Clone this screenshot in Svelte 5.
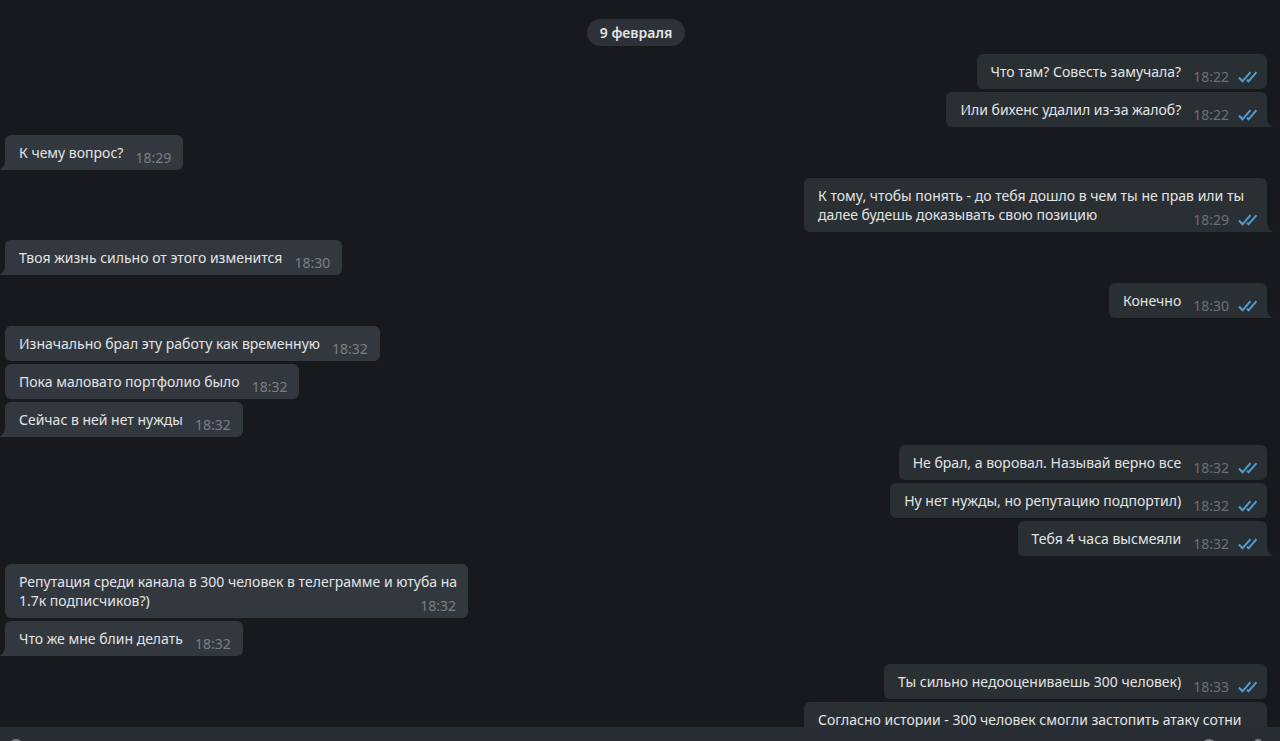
<script lang="ts">
  const groups = [
    {
      out: true,
      messages: [
        { text: 'Что там? Совесть замучала?', time: '18:22' },
        { text: 'Или бихенс удалил из-за жалоб?', time: '18:22' },
      ],
    },
    { out: false, messages: [{ text: 'К чему вопрос?', time: '18:29' }] },
    {
      out: true,
      messages: [
        {
          text: 'К тому, чтобы понять - до тебя дошло в чем ты не прав или ты далее будешь доказывать свою позицию',
          time: '18:29',
        },
      ],
    },
    { out: false, messages: [{ text: 'Твоя жизнь сильно от этого изменится', time: '18:30' }] },
    { out: true, messages: [{ text: 'Конечно', time: '18:30' }] },
    {
      out: false,
      messages: [
        { text: 'Изначально брал эту работу как временную', time: '18:32' },
        { text: 'Пока маловато портфолио было', time: '18:32' },
        { text: 'Сейчас в ней нет нужды', time: '18:32' },
      ],
    },
    {
      out: true,
      messages: [
        { text: 'Не брал, а воровал. Называй верно все', time: '18:32' },
        { text: 'Ну нет нужды, но репутацию подпортил)', time: '18:32' },
        { text: 'Тебя 4 часа высмеяли', time: '18:32' },
      ],
    },
    {
      out: false,
      messages: [
        {
          text: 'Репутация среди канала в 300 человек в телеграмме и ютуба на 1.7к подписчиков?)',
          time: '18:32',
        },
        { text: 'Что же мне блин делать', time: '18:32' },
      ],
    },
    {
      out: true,
      messages: [
        { text: 'Ты сильно недооцениваешь 300 человек)', time: '18:33' },
        { text: 'Согласно истории - 300 человек смогли застопить атаку сотни', time: '18:33' },
      ],
    },
  ]
</script>

<div class="chat">
  <main class="feed">
    <div class="date">9 февраля</div>
    {#each groups as group}
      <section class="group" class:out={group.out}>
        {#each group.messages as message, i}
          <div class="bubble" class:tail={i === group.messages.length - 1}>
            {message.text}
            <span class="meta">
              <time>{message.time}</time>
              {#if group.out}
                <svg width="20" height="12" viewBox="0 0 20 12" aria-hidden="true">
                  <path d="M1 6.5 L4.5 10.3 L12.5 1.2 M9 8.8 L10.5 10.3 L18.5 1.2" />
                </svg>
              {/if}
            </span>
          </div>
        {/each}
      </section>
    {/each}
  </main>

  <footer class="composer">
    <button aria-label="Прикрепить файл">
      <svg width="16" height="16" viewBox="0 0 16 16"><circle cx="8" cy="8" r="7" /></svg>
    </button>
    <span class="space"></span>
    <button aria-label="Эмодзи">
      <svg width="16" height="16" viewBox="0 0 16 16"><circle cx="8" cy="8" r="7" /></svg>
    </button>
    <button class="voice" aria-label="Голосовое сообщение">
      <svg width="16" height="16" viewBox="0 0 16 16"><rect x="5" y="1" width="6" height="10" rx="3" /></svg>
    </button>
  </footer>
</div>

<style>
  :global(body) {
    margin: 0;
    background: #18191d;
  }

  .chat {
    height: 100vh;
    display: flex;
    flex-direction: column;
    overflow: hidden;
    background: #18191d;
    color: #e2e4e6;
    font: 14px/19px 'Noto Sans', 'Open Sans', sans-serif;
  }

  .feed {
    flex: 1;
    min-height: 0;
    overflow: hidden;
    display: flex;
    flex-direction: column;
    gap: 8px;
    padding: 19px 13px 0 5px;
  }

  .date {
    flex: none;
    align-self: center;
    padding: 4px 13px;
    border-radius: 14px;
    background: #2c3237;
    font-weight: 600;
  }

  .group {
    --bubble: #33383e;
    flex: none;
    display: flex;
    flex-direction: column;
    align-items: flex-start;
    gap: 3px;
  }
  .group.out {
    --bubble: #2a2f33;
    align-items: flex-end;
  }

  .bubble {
    position: relative;
    box-sizing: border-box;
    max-width: 463px;
    padding: 8px 10px 8px 14px;
    border-radius: 6px;
    background: var(--bubble);
  }

  /* corner that points to the edge of the window */
  .tail::after {
    content: '';
    position: absolute;
    left: -6px;
    bottom: 0;
    width: 12px;
    height: 10px;
    background: var(--bubble);
    clip-path: path('M6 0 C6 5 4 8 0 10 L12 10 L12 0 Z');
  }
  .out .tail::after {
    left: auto;
    right: -6px;
    transform: scaleX(-1);
  }

  .meta {
    float: right;
    display: flex;
    align-items: center;
    gap: 9px;
    margin: 5px 2px -5px 12px;
    color: #7b7f85;
  }
  .out .meta {
    margin-right: -1px;
    color: #6c7175;
  }

  .meta path {
    fill: none;
    stroke: #4f9fd6;
    stroke-width: 2;
  }

  .composer {
    flex: none;
    height: 14px;
    overflow: hidden;
    display: flex;
    align-items: flex-start;
    background: #282d33;
  }
  .composer button {
    flex: none;
    margin: 12px 8px 0;
    padding: 0;
    border: 0;
    background: none;
  }
  .composer .voice {
    margin: 12px 14px 0 25px;
  }
  .composer svg {
    display: block;
    fill: none;
    stroke: #7b7f85;
    stroke-width: 2;
  }
  .space {
    flex: 1;
  }
</style>
